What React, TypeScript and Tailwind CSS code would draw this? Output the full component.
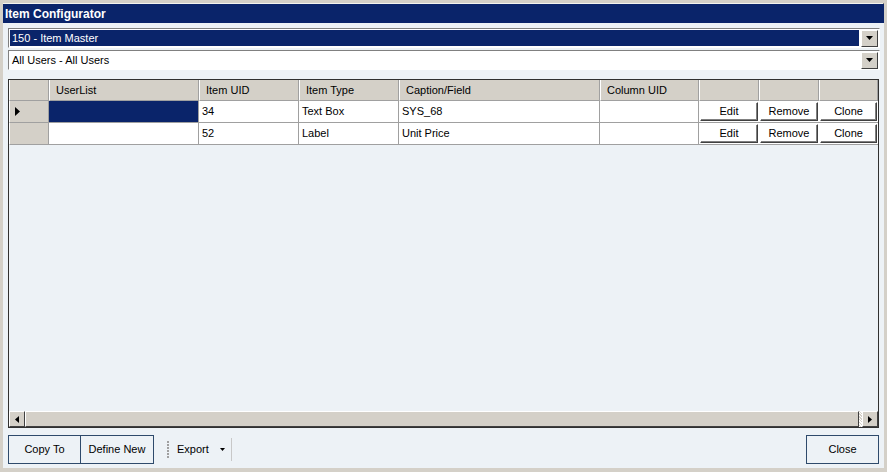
import React from "react";

const font = { fontFamily: '"Liberation Sans", Arial, sans-serif' };

function DropArrow() {
  return (
    <div className="w-[17px] h-[17px] bg-[#d4d0c8] border border-t-white border-l-white border-r-[#404040] border-b-[#404040] flex items-center justify-center">
      <svg width="7" height="4" viewBox="0 0 7 4">
        <path d="M0 0h7L3.5 4z" fill="#000" />
      </svg>
    </div>
  );
}

function Combo({ text, selected }: { text: string; selected?: boolean }) {
  return (
    <div className="h-[20px] flex items-center border border-t-[#808080] border-l-[#808080] border-r-white border-b-white bg-white">
      <div className="flex-1 h-full p-[1px] pr-[2px]">
        <div
          className={
            "h-full flex items-center pl-[2px] text-[11px] " +
            (selected ? "bg-[#0a246a] text-white" : "text-black")
          }
        >
          {text}
        </div>
      </div>
      <div className="pr-[1px]">
        <DropArrow />
      </div>
    </div>
  );
}

const cols = [
  { w: 150, h: "UserList" },
  { w: 100, h: "Item UID" },
  { w: 100, h: "Item Type" },
  { w: 201, h: "Caption/Field" },
  { w: 99, h: "Column UID" },
  { w: 60, h: "" },
  { w: 60, h: "" },
  { w: 59, h: "" },
];

const rows = [
  ["", "34", "Text Box", "SYS_68", ""],
  ["", "52", "Label", "Unit Price", ""],
];

function HeaderCell({ w, children }: { w: number; children?: React.ReactNode }) {
  return (
    <div
      className="h-[21px] shrink-0 bg-[#d4d0c8] border-r border-b border-r-[#a0a0a0] border-b-[#a0a0a0] border-l border-l-white flex items-center pl-[6px] text-[11px] text-black"
      style={{ width: w }}
    >
      {children}
    </div>
  );
}

function CellButton({ w, label }: { w: number; label: string }) {
  return (
    <div className="h-[22px] shrink-0 bg-white p-[1px] border-b border-b-[#a0a0a0]" style={{ width: w }}>
      <div className="h-full w-full bg-white border border-t-white border-l-white border-r-[#404040] border-b-[#404040] shadow-[inset_-1px_-1px_0_#808080] flex items-center justify-center text-[11px] text-black">
        {label}
      </div>
    </div>
  );
}

function ScrollArrow({ dir }: { dir: "l" | "r" }) {
  return (
    <div className="w-[16px] h-[16px] bg-[#d4d0c8] border border-t-white border-l-white border-r-[#404040] border-b-[#404040] flex items-center justify-center">
      <svg width="4" height="7" viewBox="0 0 4 7">
        {dir === "l" ? <path d="M4 0v7L0 3.5z" fill="#000" /> : <path d="M0 0v7l4-3.5z" fill="#000" />}
      </svg>
    </div>
  );
}

export default function App() {
  return (
    <div
      className="w-[887px] h-[472px] bg-[#d4d0c8] border-[3px] border-[#d4d0c8] shadow-[inset_-1px_-1px_0_#808080,inset_1px_1px_0_#f4f3ee] flex flex-col overflow-hidden"
      style={font}
    >
      {/* title bar */}
      <div className="h-[19px] mt-[1px] bg-[#0a246a] text-white font-bold text-[12px] flex items-center pl-[2px] shrink-0">
        Item Configurator
      </div>

      <div className="flex-1 bg-[#edf2f6] flex flex-col pl-[5px] pr-[4px] pt-[5px] border-b border-b-[#d4d0c8]">
        <Combo text="150 - Item Master" selected />
        <div className="h-[2px]" />
        <Combo text="All Users - All Users" />

        {/* data grid */}
        <div className="mt-[9px] h-[349px] w-[871px] border border-[#303030] flex flex-col bg-[#edf2f6] overflow-hidden">
          <div className="flex">
            <HeaderCell w={40} />
            {cols.map((c, i) => (
              <HeaderCell key={i} w={c.w}>
                {c.h}
              </HeaderCell>
            ))}
          </div>
          {rows.map((r, ri) => (
            <div key={ri} className="flex">
              <div className="w-[40px] h-[22px] shrink-0 bg-[#d4d0c8] border-r border-b border-[#a0a0a0] border-l border-l-white flex items-center pl-[5px]">
                {ri === 0 && (
                  <svg width="5" height="9" viewBox="0 0 5 9">
                    <path d="M0 0v9l5-4.5z" fill="#000" />
                  </svg>
                )}
              </div>
              {r.map((v, ci) => (
                <div
                  key={ci}
                  className={
                    "h-[22px] shrink-0 border-r border-b border-[#a0a0a0] flex items-center pl-[3px] text-[11px] " +
                    (ri === 0 && ci === 0 ? "bg-[#0a246a] text-white" : "bg-white text-black")
                  }
                  style={{ width: cols[ci].w }}
                >
                  {v}
                </div>
              ))}
              <CellButton w={60} label="Edit" />
              <CellButton w={60} label="Remove" />
              <CellButton w={59} label="Clone" />
            </div>
          ))}
          <div className="flex-1" />
          {/* horizontal scroll bar */}
          <div className="h-[16px] flex bg-[#d4d0c8]">
            <ScrollArrow dir="l" />
            <div className="flex-1 bg-[#d4d0c8] border border-t-white border-l-white border-r-[#404040] border-b-[#404040]" />
            <div className="w-[3px] bg-[repeating-linear-gradient(45deg,#ffffff_0,#ffffff_1px,#d4d0c8_1px,#d4d0c8_2px)]" />
            <ScrollArrow dir="r" />
          </div>
        </div>

        {/* footer buttons */}
        <div className="mt-[7px] flex items-center">
          <div className="w-[73px] h-[29px] border border-[#2e4a6b] bg-[#edf2f6] flex items-center justify-center text-[11px] text-black">
            Copy To
          </div>
          <div className="w-[73px] h-[29px] border border-l-0 border-[#2e4a6b] bg-[#edf2f6] flex items-center justify-center text-[11px] text-black">
            Define New
          </div>
          <div className="ml-[13px] h-[23px] flex items-center border-r border-r-[#c8c8c8] pr-[6px]">
            <div className="flex flex-col gap-[1px] mr-[8px]">
              {[0, 1, 2, 3, 4, 5].map((i) => (
                <div key={i} className="w-[2px] h-[2px] bg-[#a0a0a0]" />
              ))}
            </div>
            <span className="text-[11px] text-black">Export</span>
            <svg className="ml-[11px]" width="5" height="3" viewBox="0 0 5 3">
              <path d="M0 0h5L2.5 3z" fill="#000" />
            </svg>
          </div>
          <div className="flex-1" />
          <div className="w-[73px] h-[29px] mr-[1px] border border-[#2e4a6b] bg-[#edf2f6] flex items-center justify-center text-[11px] text-black">
            Close
          </div>
        </div>
      </div>
    </div>
  );
}
